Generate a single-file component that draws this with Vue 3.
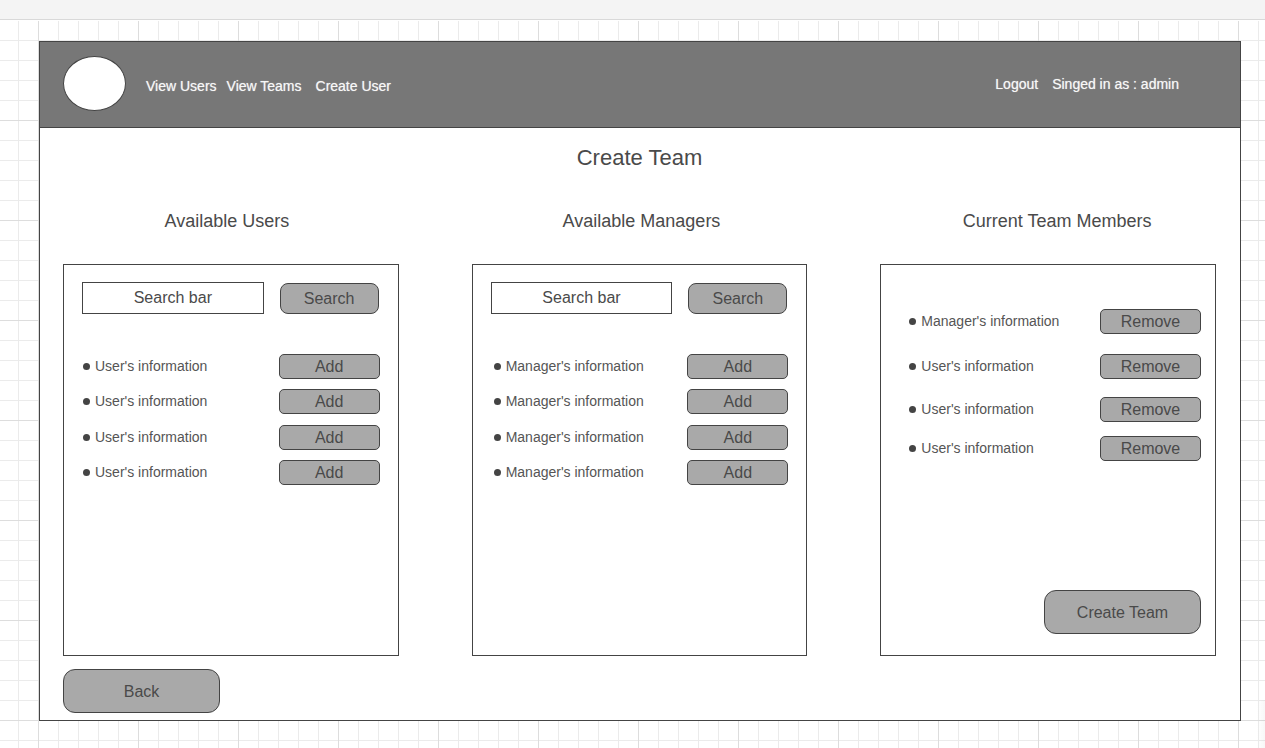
<script setup>
const pools = [
  { id: 'users', title: 'Available Users', label: "User's information" },
  { id: 'managers', title: 'Available Managers', label: "Manager's information" },
]
const members = [
  "Manager's information",
  "User's information",
  "User's information",
  "User's information",
]
</script>

<template>
  <div class="canvas">
    <div class="toolbar"></div>
    <div class="frame">
      <header class="header">
        <div class="logo"></div>
        <nav class="nav">
          <a href="#users">View Users</a>
          <a href="#teams">View Teams</a>
          <a href="#create" class="create-link">Create User</a>
        </nav>
        <div class="account">
          <a href="#logout">Logout</a>
          <span>Singed in as : admin</span>
        </div>
      </header>

      <main class="main">
        <h1>Create Team</h1>
        <div class="columns">
          <section v-for="pool in pools" :key="pool.id" class="column" :class="pool.id">
            <h2>{{ pool.title }}</h2>
            <div class="panel">
              <form class="search" @submit.prevent>
                <input type="text" placeholder="Search bar" :aria-label="'Search ' + pool.title" />
                <button type="submit" class="btn">Search</button>
              </form>
              <ul class="list">
                <li v-for="n in 4" :key="n">
                  <i class="dot"></i>
                  <span class="info">{{ pool.label }}</span>
                  <button type="button" class="btn small">Add</button>
                </li>
              </ul>
            </div>
          </section>

          <section class="column members">
            <h2>Current Team Members</h2>
            <div class="panel">
              <ul class="list">
                <li v-for="(member, i) in members" :key="i">
                  <i class="dot"></i>
                  <span class="info">{{ member }}</span>
                  <button type="button" class="btn small">Remove</button>
                </li>
              </ul>
              <button type="button" class="btn large">Create Team</button>
            </div>
          </section>
        </div>
        <button type="button" class="btn large back">Back</button>
      </main>
    </div>
  </div>
</template>

<style>
body {
  margin: 0;
}
</style>

<style scoped>
* {
  box-sizing: border-box;
}
.canvas {
  min-height: 100vh;
  padding-bottom: 27px;
  font-family: "Liberation Sans", Arial, sans-serif;
  color: #444;
  background-color: #fff;
  background-image:
    linear-gradient(to right, transparent, rgba(0, 0, 0, 0.03)),
    linear-gradient(to right, #ddd 1px, transparent 1px),
    linear-gradient(to bottom, #ddd 1px, transparent 1px),
    linear-gradient(to right, #ebebeb 1px, transparent 1px),
    linear-gradient(to bottom, #ebebeb 1px, transparent 1px);
  background-size: 8px 48px, 100px 100px, 100px 100px, 20px 20px, 20px 20px;
  background-position: right bottom, 38px 20px, 38px 20px, 18px 0, 18px 0;
  background-repeat: no-repeat, repeat, repeat, repeat, repeat;
}
.toolbar {
  height: 21px;
  background: #f4f4f4;
  border-bottom: 1px solid #fff;
  box-shadow: inset 0 -1px 0 #d9d9d9;
}
.frame {
  margin: 20px 24px 0 39px;
  background: #fff;
  border: 1px solid #444;
}
.header {
  display: flex;
  align-items: center;
  height: 86px;
  padding: 0 61px 0 23px;
  background: #777;
  border-bottom: 1px solid #444;
  font-size: 14px;
  line-height: 16px;
  color: #f8f8f8;
  text-shadow: 0 0 1px rgba(255, 255, 255, 0.6);
}
.header a {
  color: inherit;
  text-decoration: none;
}
.logo {
  width: 63px;
  height: 55px;
  margin-bottom: 2px;
  border: 1px solid #444;
  border-radius: 50%;
  background: #fff;
}
.nav {
  display: flex;
  gap: 10px;
  margin: 2px 0 0 20px;
}
.create-link {
  margin-left: 4px;
}
.account {
  display: flex;
  gap: 14px;
  margin: 0 0 2px auto;
}
.main {
  padding: 17px 24px 7px 23px;
}
h1,
h2 {
  margin: 0;
  font-weight: 400;
  text-align: center;
  color: #4a4a4a;
}
h1 {
  font-size: 22px;
  line-height: 26px;
}
h2 {
  margin-bottom: 33px;
  font-size: 18px;
  line-height: 20px;
}
.users h2 {
  padding-right: 8px;
}
.managers h2 {
  padding-left: 4px;
}
.members h2 {
  padding-left: 18px;
}
.columns {
  display: grid;
  grid-template-columns: repeat(3, minmax(0, 1fr));
  gap: 73px;
  margin-top: 40px;
}
.panel {
  min-height: 392px;
  padding: 17px 18px 21px;
  border: 1px solid #444;
}
.search {
  display: flex;
  align-items: flex-end;
  gap: 16px;
  margin: 0 1px 40px 0;
}
.search input {
  flex: 1;
  min-width: 0;
  height: 32px;
  padding: 0;
  border: 1px solid #444;
  border-radius: 0;
  background: #fff;
  color: #444;
  font: inherit;
  font-size: 16px;
  text-align: center;
}
.search input::placeholder {
  color: #4a4a4a;
  opacity: 1;
}
.btn {
  width: 99px;
  height: 31px;
  padding: 0;
  border: 1px solid #444;
  border-radius: 8px;
  background: #a9a9a9;
  color: #4a4a4a;
  font: inherit;
  font-size: 16px;
  line-height: 18px;
}
.btn.small {
  width: 101px;
  height: 25px;
  border-radius: 5px;
}
.btn.large {
  display: block;
  width: 157px;
  height: 44px;
  padding-top: 2px;
  border-radius: 12px;
}
.list {
  margin: 0;
  padding: 0;
  list-style: none;
}
.list li {
  display: flex;
  align-items: center;
  padding-left: 1px;
}
.list li + li {
  margin-top: 10px;
}
.list li:nth-child(3) {
  margin-top: 11px;
}
.managers .list li {
  padding-left: 3px;
}
.dot {
  width: 7px;
  height: 7px;
  margin-right: 5px;
  border-radius: 50%;
  background: #444;
}
.info {
  flex: 1;
  margin-bottom: 1px;
  font-size: 14px;
  line-height: 16px;
  color: #555;
}
.members .panel {
  display: flex;
  flex-direction: column;
  padding: 44px 14px 21px 27px;
}
.members .list li:nth-child(2) {
  margin-top: 20px;
}
.members .list li:nth-child(3) {
  margin-top: 18px;
}
.members .list li:nth-child(4) {
  margin-top: 14px;
}
.members .large {
  margin: auto 0 0 auto;
}
.back {
  margin-top: 13px;
}
</style>
